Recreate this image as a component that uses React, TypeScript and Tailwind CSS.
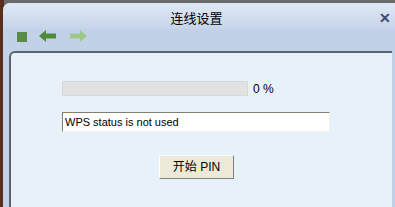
import React from 'react';

const font = { fontFamily: '"Liberation Sans", Arial, "Noto Sans CJK SC", sans-serif' };

function Square() {
  return <div className="h-[10px] w-[10px] bg-[#5b8a45]" />;
}

function Arrow({ dir, color }: { dir: 'left' | 'right'; color: string }) {
  return (
    <svg width="18" height="12" viewBox="0 0 18 12" className={dir === 'right' ? 'scale-x-[-1]' : ''}>
      <path d="M0 6 L7 0 L7 3.5 L17 3.5 L17 8.5 L7 8.5 L7 12 Z" fill={color} />
    </svg>
  );
}

export default function App() {
  return (
    <div className="relative h-[207px] w-[395px] overflow-hidden bg-[#6a6a6a]" style={font}>
      <div className="absolute left-0 top-0 h-full w-[4px] bg-[#5a2e1e]" />
      <div className="absolute left-[3px] top-[3px] flex h-[204px] w-[392px] flex-col rounded-tl-[7px] bg-[#c3d1e8] pl-[6px] pr-[3px]">
        <div className="-ml-[6px] -mr-[3px] flex h-[26px] items-center rounded-tl-[7px] bg-gradient-to-b from-[#e0e8f4] to-[#c6d4ea] pt-[4px]">
          <div className="flex-1 pl-[15px] text-center text-[13px] leading-none text-black">连线设置</div>
          <div className="w-[20px] text-center text-[14px] font-bold leading-none text-[#3d4a6a]">✕</div>
        </div>
        <div className="flex h-[22px] items-start gap-[12px] pl-[8px] pt-[1px]">
          <div className="pt-[2px]">
            <Square />
          </div>
          <Arrow dir="left" color="#4f8a3c" />
          <Arrow dir="right" color="#9cc98a" />
        </div>
        <div className="flex flex-1 flex-col rounded-tl-[6px] border-l-2 border-t-2 border-[#5c6270] bg-[#e7f1f9]">
          <div className="mt-[28px] flex h-[15px] items-center pl-[51px]">
            <div className="h-[15px] w-[186px] border border-[#d8d8d8] bg-[#e2e2e2]" />
            <span className="ml-[5px] text-[12px] leading-none text-black">0 %</span>
          </div>
          <div className="ml-[51px] mt-[16px] flex h-[20px] w-[268px] items-center border-l border-t border-[#808070] border-b border-r border-b-[#f0f0e8] border-r-[#f0f0e8] bg-white pl-[2px] text-[11px] text-black">
            WPS status is not used
          </div>
          <div className="ml-[148px] mt-[23px] flex h-[24px] w-[75px] items-center justify-center border border-t-white border-l-white border-b-[#808080] border-r-[#808080] bg-[#ece9d8] text-[12px] text-black">
            开始 PIN
          </div>
        </div>
      </div>
    </div>
  );
}
